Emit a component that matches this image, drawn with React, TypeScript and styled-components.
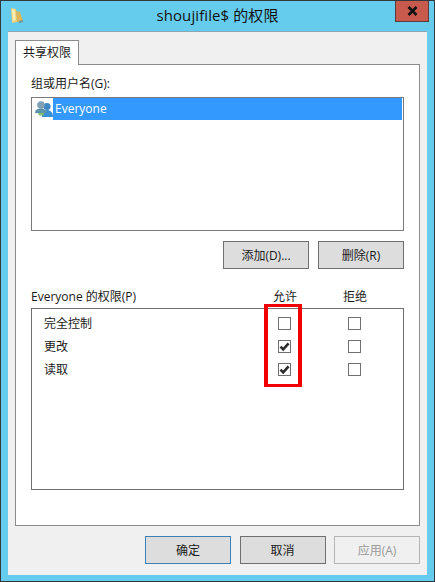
import React from "react";
import styled, { createGlobalStyle } from "styled-components";

const GlobalStyle = createGlobalStyle`
  html, body {
    margin: 0;
    padding: 0;
    background: #66ccee;
  }
  * {
    box-sizing: border-box;
  }
`;

const Window = styled.div`
  width: 435px;
  height: 582px;
  display: flex;
  flex-direction: column;
  padding: 0 7px 6px;
  background-color: #66ccee;
  border: 1px solid #33383c;
  font-family: "Open Sans", "Noto Sans CJK SC", sans-serif;
  font-size: 12px;
  color: #1a1a1a;
`;

const TitleBar = styled.div`
  height: 30px;
  flex: none;
  display: grid;
  grid-template-columns: 1fr auto 1fr;
  align-items: start;
`;

const FolderIcon = styled.svg`
  width: 14px;
  height: 18px;
  margin: 5px 0 0 2px;
`;

const Title = styled.div`
  margin-top: 4px;
  font-size: 15px;
  letter-spacing: 0.1px;
  line-height: 20px;
  color: #111;
`;

const CloseButton = styled.div`
  justify-self: end;
  width: 34px;
  height: 21px;
  margin-right: -2px;
  display: flex;
  align-items: center;
  justify-content: center;
  background-color: #c75a4c;
  border: 1px solid #5a3a3c;
  border-top: none;
`;

const Body = styled.div`
  flex: 1;
  display: flex;
  flex-direction: column;
  padding: 8px 7px 10px;
  background-color: #f0f0f0;
  border-top: 1px solid #8aa6b6;
`;

const Tab = styled.div`
  width: 64px;
  height: 25px;
  margin-bottom: -1px;
  padding-bottom: 2px;
  position: relative;
  z-index: 1;
  display: flex;
  align-items: center;
  justify-content: center;
  background-color: #fff;
  border: 1px solid #8c8c8c;
  border-bottom: none;
`;

const Pane = styled.div`
  height: 462px;
  display: flex;
  flex-direction: column;
  padding: 10px 15px 0 15px;
  background-color: #fff;
  border: 1px solid #8c8c8c;
`;

const FieldLabel = styled.div`
  height: 22px;
  line-height: 18px;
`;

const UserList = styled.div`
  height: 134px;
  padding: 0 1px;
  background-color: #fff;
  border: 1px solid #7a7a7a;
`;

const UserRow = styled.div`
  height: 22px;
  display: flex;
  align-items: center;
`;

const UserIcon = styled.svg`
  width: 18px;
  height: 18px;
  margin-left: 2px;
  flex: none;
`;

const UserName = styled.div`
  flex: 1;
  height: 22px;
  padding-left: 2px;
  line-height: 21px;
  color: #fff;
  background-color: #3399ff;
`;

const ActionRow = styled.div`
  display: flex;
  justify-content: flex-end;
  gap: 9px;
  margin-top: 10px;
`;

const Button = styled.div<{ $variant?: "default" | "primary" | "disabled" }>`
  width: 86px;
  height: 28px;
  display: flex;
  align-items: center;
  justify-content: center;
  background-color: ${(p) => (p.$variant === "disabled" ? "#f0f0f0" : "#dddddd")};
  color: ${(p) => (p.$variant === "disabled" ? "#9a9a9a" : "#1a1a1a")};
  border: 1px solid
    ${(p) =>
      p.$variant === "primary"
        ? "#3a7fb5"
        : p.$variant === "disabled"
          ? "#b5b5b5"
          : "#707070"};
`;

const PermHeader = styled.div`
  display: grid;
  grid-template-columns: 1fr 70px 70px;
  margin-top: 19px;
  height: 20px;
  line-height: 18px;
  padding-right: 14px;
`;

const ColumnHead = styled.div`
  text-align: center;
`;

const PermBox = styled.div`
  position: relative;
  height: 182px;
  padding: 2px 14px 0 12px;
  background-color: #fff;
  border: 1px solid #6e6e6e;
`;

const PermRow = styled.div`
  display: grid;
  grid-template-columns: 1fr 70px 70px;
  align-items: center;
  height: 23px;
`;

const CheckCell = styled.div`
  display: flex;
  justify-content: center;
  padding-top: 2px;
`;

const CheckBox = styled.div`
  width: 13px;
  height: 13px;
  display: flex;
  align-items: center;
  justify-content: center;
  background-color: #fff;
  border: 1px solid #707070;
`;

const Highlight = styled.div`
  position: absolute;
  left: 232px;
  top: -5px;
  width: 38px;
  height: 83px;
  border-style: solid;
  border-color: #f00000;
  border-width: 3px 4px;
  pointer-events: none;
`;

const Footer = styled.div`
  display: flex;
  justify-content: flex-end;
  gap: 8.5px;
  margin-top: 10px;
`;

const Check: React.FC = () => (
  <svg width="11" height="11" viewBox="0 0 11 11">
    <path d="M1.5 5.6 L4.2 8.4 L9.6 2.4" fill="none" stroke="#2b2b2b" strokeWidth="2.6" />
  </svg>
);

const perms = [
  { name: "完全控制", allow: false },
  { name: "更改", allow: true },
  { name: "读取", allow: true },
];

const App: React.FC = () => {
  return (
    <>
      <GlobalStyle />
      <Window>
        <TitleBar>
          <FolderIcon viewBox="0 0 14 18">
            <path d="M1 2 L6 3 L7 16 L2 17 Z" fill="#efcf72" />
            <path d="M6 5 L10 6 L13 15 L7 16 Z" fill="#dcb558" />
            <path d="M2 3 L5 3.6 L5.6 14 L2.8 15 Z" fill="#fbeeb0" />
            <path d="M9 15 L13 14 L13 16 L9 17 Z" fill="#6f93a3" />
          </FolderIcon>
          <Title>shoujifile$ 的权限</Title>
          <CloseButton>
            <svg width="11" height="10" viewBox="0 0 11 10">
              <path d="M1.5 1 L9.5 9 M9.5 1 L1.5 9" stroke="#111" strokeWidth="2.6" fill="none" />
            </svg>
          </CloseButton>
        </TitleBar>
        <Body>
          <Tab>共享权限</Tab>
          <Pane>
            <FieldLabel>组或用户名(G):</FieldLabel>
            <UserList>
              <UserRow>
                <UserIcon viewBox="0 0 18 18">
                  <circle cx="12" cy="6.5" r="3.6" fill="#3f86c4" />
                  <path d="M7 17 C7 12 9.5 10 12 10 C15 10 18 12 18 17 Z" fill="#3a8fd6" />
                  <circle cx="6" cy="5" r="3.8" fill="#7f9fb4" />
                  <path d="M0 13 C0 9.5 3 8.5 6 8.5 C9 8.5 11.5 10 11.5 13 Z" fill="#5d93a8" />
                  <path d="M3 13 L9.5 13 L8 15.5 L4 15.5 Z" fill="#7fc06a" />
                </UserIcon>
                <UserName>Everyone</UserName>
              </UserRow>
            </UserList>
            <ActionRow>
              <Button>添加(D)...</Button>
              <Button>删除(R)</Button>
            </ActionRow>
            <PermHeader>
              <div>Everyone 的权限(P)</div>
              <ColumnHead>允许</ColumnHead>
              <ColumnHead>拒绝</ColumnHead>
            </PermHeader>
            <PermBox>
              {perms.map((perm) => (
                <PermRow key={perm.name}>
                  <div>{perm.name}</div>
                  <CheckCell>
                    <CheckBox>{perm.allow && <Check />}</CheckBox>
                  </CheckCell>
                  <CheckCell>
                    <CheckBox />
                  </CheckCell>
                </PermRow>
              ))}
              <Highlight />
            </PermBox>
          </Pane>
          <Footer>
            <Button $variant="primary">确定</Button>
            <Button>取消</Button>
            <Button $variant="disabled">应用(A)</Button>
          </Footer>
        </Body>
      </Window>
    </>
  );
};

export default App;
